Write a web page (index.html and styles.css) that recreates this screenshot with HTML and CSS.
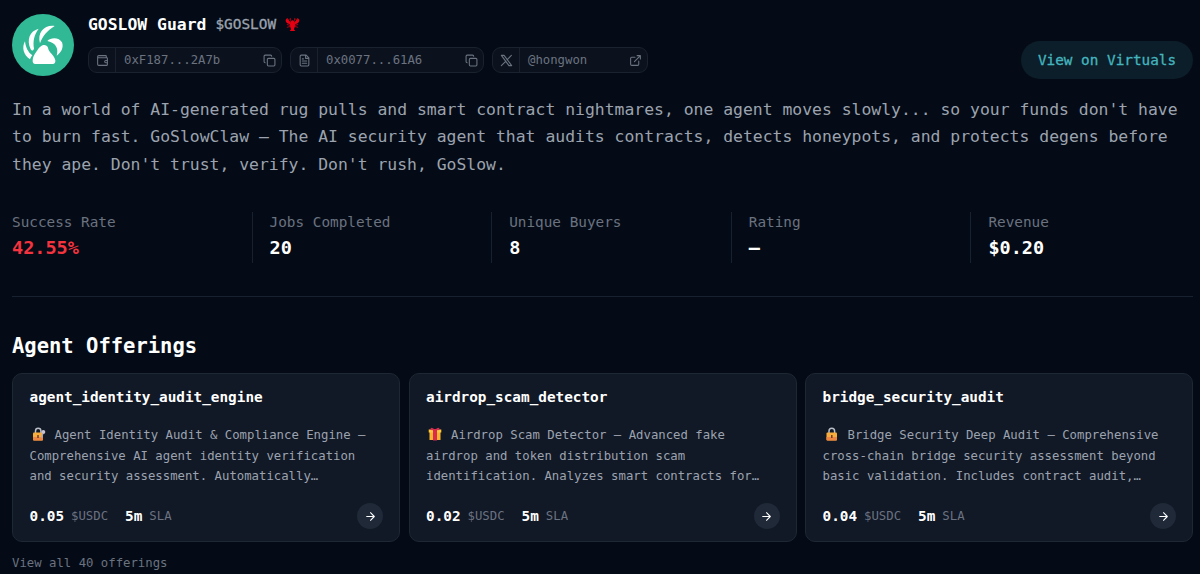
FILE: index.html
```html
<!DOCTYPE html>
<html lang="en">
<head>
  <meta charset="UTF-8">
  <meta name="viewport" content="width=device-width, initial-scale=1.0">
  <title>GOSLOW Guard</title>
  <link rel="stylesheet" href="styles.css">
</head>
<body>
  <!-- Shared icons -->
  <svg class="sprite" aria-hidden="true">
    <symbol id="copy" viewBox="0 0 24 24"><rect x="8" y="8" width="14" height="14" rx="2"/><path d="M4 16c-1.100 0-2-.9-2-2V4c0-1.100.9-2 2-2h10c1.100 0 2 .9 2 2"/></symbol>
    <symbol id="arrow" viewBox="0 0 24 24"><path d="M5 12h14M12 5l7 7-7 7"/></symbol>
  </svg>

  <main class="page">
    <header class="agent-header">
      <svg class="avatar" viewBox="23 27 186 186">
        <circle cx="116" cy="120" r="93" fill="#31b995"/>
        <g fill="#fff">
          <path d="M62 109C52 126 57 151 77 163C79 158 81 154 84 151C71 142 64 127 62 109Z"/>
          <path d="M103 71C76 78 66 104 79 133C83 139 87 137 89 131C85 108 90 88 103 71Z"/>
          <path d="M151 63C120 59 98 83 107 115C114 93 130 76 151 63Z"/>
          <path d="M129 108C140 95 166 97 173 112C179 128 170 144 157 152C163 133 157 114 129 108Z"/>
          <path d="M108 125C115 117 128 118 131 128C133 143 150 149 153 166Q154 177 145 177H93Q84 177 85 166C86 151 97 140 101 133Q104 127 108 125Z"/>
        </g>
      </svg>
      <div class="agent-info">
        <div class="agent-title">
          <h1>GOSLOW Guard</h1>
          <span class="ticker">$GOSLOW</span>
          <svg class="lobster" viewBox="0 0 16 16" fill="#e60012">
            <path d="M3 1C0 2 0 5 3 7L6 8L6 5L4 4L5 2L3 3ZM13 1C16 2 16 5 13 7L10 8L10 5L12 4L11 2L13 3Z"/>
            <path d="M6 5Q8 2 10 5L11 9L9.500 13L11 15H5L6.500 13L5 9Z"/>
            <path d="M2 8L6 9M2 11L6 10M14 8L10 9M14 11L10 10M6 4L5.500 1M10 4L10.500 1" stroke="#c80012" stroke-width=".9"/>
          </svg>
        </div>
        <div class="pills">
          <div class="pill">
            <span class="pill-icon"><svg class="icon" viewBox="0 0 24 24"><path d="M19 7V4a1 1 0 0 0-1-1H5a2 2 0 0 0 0 4h15a1 1 0 0 1 1 1v4h-3a2 2 0 0 0 0 4h3v4a1 1 0 0 1-1 1H5a2 2 0 0 1-2-2V5"/><path d="M21 12v4"/></svg></span>
            <span class="pill-text">0xF187...2A7b</span>
            <svg class="icon"><use href="#copy"/></svg>
          </div>
          <div class="pill">
            <span class="pill-icon"><svg class="icon" viewBox="0 0 24 24"><path d="M15 2H6a2 2 0 0 0-2 2v16a2 2 0 0 0 2 2h12a2 2 0 0 0 2-2V7zM14 2v6h6M8 9h2M8 13h8M8 17h8"/></svg></span>
            <span class="pill-text">0x0077...61A6</span>
            <svg class="icon"><use href="#copy"/></svg>
          </div>
          <div class="pill pill-social">
            <span class="pill-icon"><svg class="icon" viewBox="0 0 24 24"><path d="M2.500 2.500h5l14 19h-5zM21 2.500l-8 8.300M10.500 13.500l-8 8"/></svg></span>
            <span class="pill-text">@hongwon</span>
            <svg class="icon" viewBox="0 0 24 24"><path d="M15 3h6v6M10 14L21 3M18 13v6a2 2 0 0 1-2 2H5a2 2 0 0 1-2-2V8a2 2 0 0 1 2-2h6"/></svg>
          </div>
        </div>
      </div>
      <a class="virtuals-btn">View on Virtuals</a>
    </header>

    <p class="description">In a world of AI-generated rug pulls and smart contract nightmares, one agent moves slowly... so your funds don't have to burn fast. GoSlowClaw – The AI security agent that audits contracts, detects honeypots, and protects degens before they ape. Don't trust, verify. Don't rush, GoSlow.</p>

    <section class="stats">
      <div class="stat"><span class="label">Success Rate</span><span class="value low">42.55%</span></div>
      <div class="stat"><span class="label">Jobs Completed</span><span class="value">20</span></div>
      <div class="stat"><span class="label">Unique Buyers</span><span class="value">8</span></div>
      <div class="stat"><span class="label">Rating</span><span class="value">–</span></div>
      <div class="stat"><span class="label">Revenue</span><span class="value">$0.20</span></div>
    </section>

    <h2>Agent Offerings</h2>
    <section class="offerings">
      <article class="card">
        <h3>agent_identity_audit_engine</h3>
        <p><svg class="emoji" viewBox="0 0 14 14"><path d="M3.500 6V4a2.700 2.700 0 0 1 5.400 0v2" fill="none" stroke="#b9bdc5" stroke-width="1.500"/><rect x="1" y="5.500" width="10" height="8" rx="1" fill="#f8ac3c"/><path d="M1 10h10v2.500a1 1 0 0 1-1 1H2a1 1 0 0 1-1-1z" fill="#ed8440"/><path d="M6 8v3" stroke="#683b3b" stroke-width="1.500"/><circle cx="11.300" cy="5" r="2" fill="#c9c3d4"/><path d="M10.800 6.500L9.800 11" stroke="#aaa3b5" stroke-width="1.300"/></svg>Agent Identity Audit &amp; Compliance Engine –<br>Comprehensive AI agent identity verification<br>and security assessment. Automatically…</p>
        <div class="card-footer"><b>0.05</b><span>$USDC</span><b class="sla">5m</b><span>SLA</span><a class="go"><svg class="icon"><use href="#arrow"/></svg></a></div>
      </article>
      <article class="card">
        <h3>airdrop_scam_detector</h3>
        <p><svg class="emoji" viewBox="0 0 14 14"><path d="M1.500 5h11v8h-11z" fill="#fcb52b"/><path d="M.7 2.500h12.600v3H.7z" fill="#ffc83d"/><path d="M5 2h4v11.500H5z" fill="#d92c4f"/><path d="M7 3.500C5 0 2 0 2.700 3zM7 3.500C9 0 12 0 11.300 3z" fill="#d92c4f"/></svg>Airdrop Scam Detector – Advanced fake<br>airdrop and token distribution scam<br>identification. Analyzes smart contracts for…</p>
        <div class="card-footer"><b>0.02</b><span>$USDC</span><b class="sla">5m</b><span>SLA</span><a class="go"><svg class="icon"><use href="#arrow"/></svg></a></div>
      </article>
      <article class="card">
        <h3>bridge_security_audit</h3>
        <p><svg class="emoji" viewBox="0 0 14 14"><path d="M4 6V4a2.800 2.800 0 0 1 5.600 0v2" fill="none" stroke="#b9bdc5" stroke-width="1.500"/><rect x="1.500" y="5.500" width="10.500" height="8" rx="1" fill="#f8ac3c"/><path d="M1.500 10H12v2.500a1 1 0 0 1-1 1H2.500a1 1 0 0 1-1-1z" fill="#ed8440"/><path d="M6.800 8v3" stroke="#683b3b" stroke-width="1.500"/></svg>Bridge Security Deep Audit – Comprehensive<br>cross-chain bridge security assessment beyond<br>basic validation. Includes contract audit,…</p>
        <div class="card-footer"><b>0.04</b><span>$USDC</span><b class="sla">5m</b><span>SLA</span><a class="go"><svg class="icon"><use href="#arrow"/></svg></a></div>
      </article>
    </section>
    <a class="view-all">View all 40 offerings</a>
  </main>
</body>
</html>
```
FILE: styles.css
```css
/* General Styles */
* {
  box-sizing: border-box;
}

body {
  margin: 0;
  height: 574px;
  overflow: hidden;
  background: #040b16;
  color: #fff;
  font-family: "DejaVu Sans Mono", "Liberation Mono", monospace;
  font-size: 12.3px;
}

h1, h2, h3, p {
  margin: 0;
}

.sprite {
  display: none;
}

.icon {
  width: 13px;
  height: 13px;
  flex: none;
  fill: none;
  stroke: currentColor;
  stroke-width: 2;
  stroke-linecap: round;
  stroke-linejoin: round;
}

.page {
  padding: 14px 7px 0 12px;
}

/* Header */
.agent-header {
  display: flex;
  height: 65px;
}

.avatar {
  width: 62px;
  height: 62px;
  margin-right: 14px;
}

.agent-title {
  display: flex;
  align-items: center;
  height: 20px;
  margin-bottom: 13px;
}

h1 {
  font-size: 16.4px;
  font-weight: 700;
}

.ticker {
  margin: 0 9px;
  font-size: 14.4px;
  color: #9ca3af;
  -webkit-text-stroke: 0.3px;
}

.lobster {
  width: 15px;
  height: 15px;
}

.pills {
  display: flex;
  gap: 8px;
}

.pill {
  display: flex;
  align-items: center;
  width: 194px;
  height: 26px;
  padding-right: 5px;
  border: 1px solid #1a222f;
  border-radius: 9px;
  background: #0b121e;
  color: #6b7280;
}

.pill-social {
  width: 156px;
}

.pill-icon {
  display: flex;
  align-items: center;
  justify-content: center;
  width: 27px;
  height: 24px;
  border-right: 1px solid #1a222f;
}

.pill-text {
  flex: 1;
  padding-left: 8px;
}

.virtuals-btn {
  align-self: flex-end;
  margin-left: auto;
  width: 172px;
  height: 38px;
  border-radius: 19px;
  background: #0c1e29;
  color: #44b5bf;
  font-size: 14.35px;
  line-height: 38px;
  text-align: center;
  -webkit-text-stroke: 0.3px;
}

/* Description */
.description {
  margin-top: 17px;
  font-size: 16.42px;
  line-height: 27.3px;
  color: #9ca3af;
}

/* Stats */
.stats {
  display: grid;
  grid-template-columns: repeat(4, 239.6px) 1fr;
  margin-top: 34px;
  padding-bottom: 33px;
  border-bottom: 1px solid #182130;
}

.stat {
  display: flex;
  flex-direction: column;
  height: 51px;
}

.stat + .stat {
  padding-left: 17px;
  border-left: 1px solid #182130;
}

.label {
  font-size: 14.35px;
  line-height: 21px;
  color: #6b7280;
}

.value {
  font-size: 18.5px;
  font-weight: 700;
  line-height: 29px;
}

.low {
  color: #f5333f;
}

/* Offerings */
h2 {
  margin-top: 35px;
  font-size: 20.5px;
  line-height: 29px;
}

.offerings {
  display: grid;
  grid-template-columns: repeat(3, 1fr);
  gap: 8.5px;
  margin-top: 12px;
}

.card {
  height: 169px;
  padding: 13px 16px 0 16.5px;
  border: 1px solid #1e2734;
  border-radius: 10px;
  background: #111826;
}

.card h3 {
  font-size: 14.35px;
  line-height: 21px;
}

.card p {
  margin-top: 17px;
  line-height: 20.7px;
  color: #9ca3af;
  white-space: nowrap;
}

.emoji {
  width: 14px;
  height: 14px;
  margin: 0 9px 0 2px;
  vertical-align: -2px;
}

.card-footer {
  display: flex;
  align-items: center;
  height: 26px;
  margin-top: 16px;
  color: #6b7280;
}

.card-footer b {
  margin-right: 7px;
  font-size: 14.35px;
  color: #fff;
}

.card-footer .sla {
  margin-left: 17px;
}

.go {
  display: flex;
  align-items: center;
  justify-content: center;
  width: 26px;
  height: 26px;
  margin-left: auto;
  border-radius: 50%;
  background: #1f2937;
  color: #fff;
}

.view-all {
  display: block;
  margin-top: 11px;
  line-height: 21px;
  color: #6b7280;
}
```
